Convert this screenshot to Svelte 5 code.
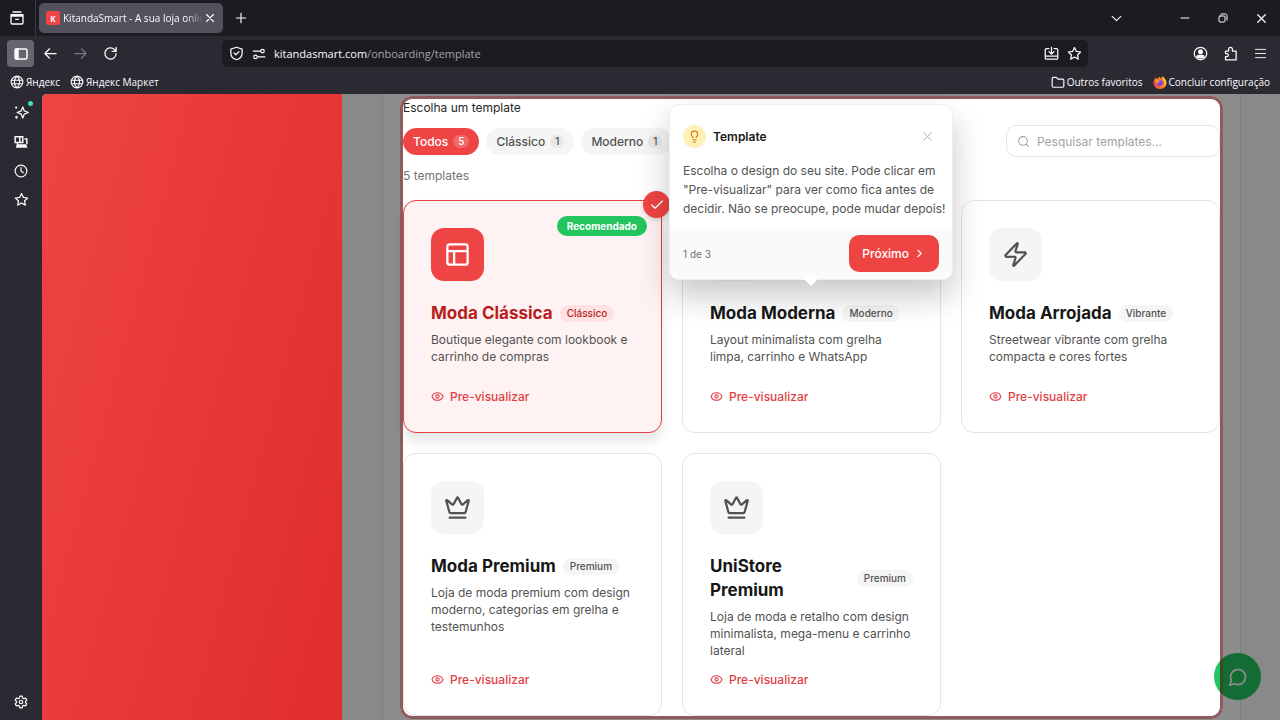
<script lang="ts">
  interface Template {
    id: string;
    name: string;
    category: string;
    description: string;
    icon: string;
    recommended?: boolean;
  }

  const templates: Template[] = [
    { id: 'classica', name: 'Moda Clássica', category: 'Clássico', description: 'Boutique elegante com lookbook e carrinho de compras', icon: 'layout', recommended: true },
    { id: 'moderna', name: 'Moda Moderna', category: 'Moderno', description: 'Layout minimalista com grelha limpa, carrinho e WhatsApp', icon: 'layout' },
    { id: 'arrojada', name: 'Moda Arrojada', category: 'Vibrante', description: 'Streetwear vibrante com grelha compacta e cores fortes', icon: 'zap' },
    { id: 'premium', name: 'Moda Premium', category: 'Premium', description: 'Loja de moda premium com design moderno, categorias em grelha e testemunhos', icon: 'crown' },
    { id: 'unistore', name: 'UniStore Premium', category: 'Premium', description: 'Loja de moda e retalho com design minimalista, mega-menu e carrinho lateral', icon: 'crown' },
  ];

  const filters = [
    { label: 'Todos', count: 5 },
    { label: 'Clássico', count: 1 },
    { label: 'Moderno', count: 1 },
  ];

  // All icons are drawn on a 24x24 grid
  const icons: Record<string, string> = {
    layout: 'M5 3h14a2 2 0 0 1 2 2v14a2 2 0 0 1-2 2H5a2 2 0 0 1-2-2V5a2 2 0 0 1 2-2zM3 9h18M9 21V9',
    zap: 'M4 14a1 1 0 0 1-.78-1.63l9.9-10.2a.5.5 0 0 1 .86.46l-1.92 6.02A1 1 0 0 0 13 10h7a1 1 0 0 1 .78 1.63l-9.9 10.2a.5.5 0 0 1-.86-.46l1.92-6.02A1 1 0 0 0 11 14z',
    crown: 'M11.562 3.266a.5.5 0 0 1 .876 0L15.39 8.87a1 1 0 0 0 1.516.294L21.183 5.5a.5.5 0 0 1 .798.519l-2.834 10.246a1 1 0 0 1-.956.734H5.81a1 1 0 0 1-.957-.734L2.02 6.02a.5.5 0 0 1 .798-.519l4.276 3.664a1 1 0 0 0 1.516-.294zM5 21h14',
    eye: 'M2.062 12.348a1 1 0 0 1 0-.696 10.75 10.75 0 0 1 19.876 0 1 1 0 0 1 0 .696 10.75 10.75 0 0 1-19.876 0M9 12a3 3 0 1 0 6 0a3 3 0 1 0-6 0',
    bulb: 'M15 14c.2-1 .7-1.7 1.5-2.5 1-.9 1.5-2.2 1.5-3.5A6 6 0 0 0 6 8c0 1 .2 2.2 1.5 3.5.7.7 1.3 1.5 1.5 2.5M9 18h6M10 22h4',
    message: 'M7.9 20A9 9 0 1 0 4 16.1L2 22Z',
    search: 'M3 11a8 8 0 1 0 16 0a8 8 0 1 0-16 0M21 21l-4.3-4.3',
    close: 'M18 6L6 18M6 6l12 12',
    check: 'M20 6L9 17l-5-5',
    chevronRight: 'M9 18l6-6-6-6',
    chevronDown: 'M4 8l8 8 8-8',
    plus: 'M12 4v16M4 12h16',
    minimize: 'M4 12h16',
    restore: 'M6 8h8a2 2 0 0 1 2 2v8a2 2 0 0 1-2 2H6a2 2 0 0 1-2-2v-8a2 2 0 0 1 2-2zM8 4h9a3 3 0 0 1 3 3v9',
    back: 'M21 12H3M10.500 4.500L3 12l7.500 7.500',
    forward: 'M3 12h18M13.500 4.500L21 12l-7.500 7.500',
    reload: 'M21 12a9 9 0 1 1-3-6.700l3 3M21 2v6.500h-6.500',
    box: 'M3 9h18v10a2 2 0 0 1-2 2H5a2 2 0 0 1-2-2zM3 9V7h18v2M6 3h12M10 14h4',
    shield: 'M12 2l9 3v6c0 6-4 9.500-9 11c-5-1.500-9-5-9-11V5zM8 11l3 3 5-5',
    tune: 'M2 7h13M15 7a3 3 0 1 0 6 0a3 3 0 1 0-6 0M9 17h13M3 17a3 3 0 1 0 6 0a3 3 0 1 0-6 0',
    install: 'M8 4H4a2 2 0 0 0-2 2v13a2 2 0 0 0 2 2h16a2 2 0 0 0 2-2V6a2 2 0 0 0-2-2h-4M2 16h20M12 2v10M8 9l4 4 4-4',
    star: 'M12 2.500l3 6.200 6.800.9-5 4.700 1.300 6.700-6.100-3.300L5.900 21l1.300-6.700-5-4.700 6.800-.9z',
    globe: 'M2 12a10 10 0 1 0 20 0a10 10 0 1 0-20 0M3 9h18M3 15h18M12 2c-6 6-6 14 0 20M12 2c6 6 6 14 0 20',
    folder: 'M2 6a2 2 0 0 1 2-2h5l3 3h8a2 2 0 0 1 2 2v10a2 2 0 0 1-2 2H4a2 2 0 0 1-2-2z',
    puzzle: 'M4 8h5V5a3 3 0 0 1 6 0v3h6v14H4v-5h2a2.500 2.500 0 0 0 0-5H4z',
    menu: 'M1 3h22M1 12h22M1 21h22',
    clock: 'M2 12a10 10 0 1 0 20 0a10 10 0 1 0-20 0M12 6v6l4 3',
    sparkle: 'M14 3l2.500 6.500L23 12l-6.500 2.500L14 21l-2.500-6.500L5 12l6.500-2.500zM2.500 4h2M2.500 19.500h3M3.500 3v2M4 18v3',
    gear: 'M10 2h4l.8 3.200 2 1.100 3.200-.9 2 3.500-2.400 2.200v1.800l2.400 2.200-2 3.500-3.200-.9-2 1.100L14 22h-4l-.8-3.200-2-1.100-3.200.9-2-3.500 2.400-2.200v-1.800L2 8.900l2-3.500 3.200.9 2-1.100zM9 12a3 3 0 1 0 6 0a3 3 0 1 0-6 0',
  };

  let selectedId = $state('classica');
  let activeFilter = $state('Todos');
  let query = $state('');
  let tourOpen = $state(true);

  let visible = $derived(
    templates.filter(
      (t) =>
        (activeFilter === 'Todos' || t.category === activeFilter) &&
        t.name.toLowerCase().includes(query.toLowerCase())
    )
  );
</script>

{#snippet icon(name: string, size: number, stroke = 2)}
  <svg
    width={size}
    height={size}
    viewBox="0 0 24 24"
    fill="none"
    stroke="currentColor"
    stroke-width={stroke}
    stroke-linecap="round"
    stroke-linejoin="round"
    aria-hidden="true"
  >
    <path d={icons[name]} />
  </svg>
{/snippet}

<div class="window">
  <header class="chrome">
    <div class="tab-bar">
      <button class="view-button" aria-label="Firefox View">{@render icon('box', 16)}</button>
      <div class="tab">
        <span class="favicon">K</span>
        <span class="tab-title">KitandaSmart - A sua loja online</span>
        <button class="tab-close" aria-label="Fechar separador">{@render icon('close', 14)}</button>
      </div>
      <button class="tool" aria-label="Novo separador">{@render icon('plus', 14)}</button>
      <div class="window-buttons">
        <button class="tabs-list" aria-label="Listar separadores">{@render icon('chevronDown', 13)}</button>
        <button aria-label="Minimizar">{@render icon('minimize', 12)}</button>
        <button aria-label="Restaurar">{@render icon('restore', 12)}</button>
        <button aria-label="Fechar">{@render icon('close', 15)}</button>
      </div>
    </div>

    <div class="toolbar">
      <button class="panel-toggle" aria-label="Barra lateral">
        <svg width="16" height="16" viewBox="0 0 16 16" fill="none" stroke="currentColor" stroke-width="1.5" aria-hidden="true">
          <rect x="2" y="3" width="12" height="10" rx="1.500" />
          <path d="M3 3h2v10H3z" fill="currentColor" />
        </svg>
      </button>
      <button class="tool" aria-label="Recuar">{@render icon('back', 15)}</button>
      <button class="tool tool--off" aria-label="Avançar" disabled>{@render icon('forward', 15)}</button>
      <button class="tool" aria-label="Recarregar">{@render icon('reload', 15)}</button>
      <div class="url-bar">
        {@render icon('shield', 15)}
        {@render icon('tune', 14)}
        <span class="url">kitandasmart.com<span class="url-path">/onboarding/template</span></span>
        {@render icon('install', 15)}
        {@render icon('star', 15)}
      </div>
      <button class="tool" aria-label="Conta">
        <svg width="15" height="15" viewBox="0 0 24 24" fill="none" stroke="currentColor" stroke-width="2" aria-hidden="true">
          <circle cx="12" cy="12" r="10" />
          <circle cx="12" cy="9" r="4" fill="currentColor" stroke="none" />
          <path d="M5 17c1-3 3-3 7-3s6 0 7 3c-3 4-11 4-14 0z" fill="currentColor" stroke="none" />
        </svg>
      </button>
      <button class="tool" aria-label="Extensões">{@render icon('puzzle', 15)}</button>
      <button class="tool" aria-label="Menu">{@render icon('menu', 11)}</button>
    </div>

    <nav class="bookmarks">
      <a href="#yandex">{@render icon('globe', 14)}Яндекс</a>
      <a href="#market">{@render icon('globe', 14)}Яндекс Маркет</a>
      <span class="spacer"></span>
      <a href="#others">{@render icon('folder', 14)}Outros favoritos</a>
      <a href="#setup">
        <svg width="14" height="14" viewBox="0 0 24 24" aria-hidden="true">
          <path d="M3 7l2-3 1 3 3-1 1-3c3 1 4 3 5 4V2c4 2 8 6 8 12a11 10 0 0 1-22 0c0-3 1-5 2-7z" fill="#ff7a2a" />
          <path d="M15 2c4 2 8 6 8 12a10 10 0 0 1-5 8c3-5 3-9 0-13z" fill="#ffc83c" />
          <path d="M1 12c1 8 8 11 15 9-6 0-11-3-12-10z" fill="#f0345c" />
          <circle cx="12" cy="13.500" r="5" fill="#7a46d8" />
          <path d="M5 10c3-2 5 0 8 0-1 2-4 1-4 4-2 0-4-2-4-4z" fill="#ff9638" />
        </svg>
        Concluir configuração
      </a>
    </nav>
  </header>

  <div class="body">
    <aside class="side-bar">
      <button class="has-dot" aria-label="Assistente">{@render icon('sparkle', 15)}</button>
      <button aria-label="Separadores sincronizados">
        <svg width="14" height="14" viewBox="0 0 24 24" fill="none" stroke="currentColor" stroke-width="2.5" aria-hidden="true">
          <path d="M2 3h13v10H2zM10 3v10M18 7h4v9M6 13v4" />
          <path d="M5 16h16l2 6H3z" fill="currentColor" stroke="none" />
        </svg>
      </button>
      <button aria-label="Histórico">{@render icon('clock', 14)}</button>
      <button aria-label="Favoritos">{@render icon('star', 15)}</button>
      <button class="settings" aria-label="Definições">{@render icon('gear', 14)}</button>
    </aside>

    <div class="page">
      <div class="hero"></div>

      <main>
        <section class="panel">
          <h1>Escolha um template</h1>
          <div class="filter-row">
            <div class="filters">
              {#each filters as f (f.label)}
                <button
                  class="pill"
                  class:pill--active={activeFilter === f.label}
                  onclick={() => (activeFilter = f.label)}
                >
                  {f.label}<span class="pill-count">{f.count}</span>
                </button>
              {/each}
            </div>
            <label class="search">
              {@render icon('search', 13)}
              <input type="text" placeholder="Pesquisar templates..." aria-label="Pesquisar templates" bind:value={query} />
            </label>
          </div>
          <p class="result-count">{visible.length} templates</p>

          <div class="cards">
            {#each visible as t (t.id)}
              <article class="card" class:card--selected={selectedId === t.id}>
                {#if selectedId === t.id}
                  <span class="card-check">{@render icon('check', 16)}</span>
                {/if}
                {#if t.recommended}
                  <span class="card-flag">Recomendado</span>
                {/if}
                <button class="card-icon" aria-label="Selecionar {t.name}" onclick={() => (selectedId = t.id)}>
                  {@render icon(t.icon, 27)}
                </button>
                <div class="card-heading">
                  <h2>{t.name}</h2>
                  <span class="category">{t.category}</span>
                </div>
                <p class="card-text">{t.description}</p>
                <button class="preview">{@render icon('eye', 13)}Pre-visualizar</button>
              </article>
            {/each}
          </div>
        </section>

        <button class="chat" aria-label="WhatsApp">{@render icon('message', 20)}</button>

        {#if tourOpen}
          <div class="spotlight"></div>
          <div class="tour" role="dialog" aria-labelledby="tour-title">
            <div class="tour-head">
              <span class="tour-bulb">{@render icon('bulb', 13)}</span>
              <h3 id="tour-title">Template</h3>
              <button class="tour-close" aria-label="Fechar" onclick={() => (tourOpen = false)}>
                {@render icon('close', 15, 1.5)}
              </button>
            </div>
            <p class="tour-text">
              Escolha o design do seu site. Pode clicar em "Pre-visualizar" para ver como fica antes de decidir. Não se preocupe, pode mudar depois!
            </p>
            <div class="tour-foot">
              <span>1 de 3</span>
              <button class="tour-next">Próximo{@render icon('chevronRight', 13)}</button>
            </div>
          </div>
        {/if}
      </main>
    </div>
  </div>
</div>

<style>
  :global(body) {
    margin: 0;
  }

  .window {
    display: flex;
    flex-direction: column;
    height: 100vh;
    overflow: hidden;
    background: #2b2a33;
    color: #fbfbfe;
    font-family: Inter, 'Liberation Sans', sans-serif;
    font-size: 12px;
  }

  .window *,
  .window *::before,
  .window *::after {
    box-sizing: border-box;
  }

  button {
    display: flex;
    align-items: center;
    justify-content: center;
    padding: 0;
    border: none;
    background: none;
    color: inherit;
    font: inherit;
    cursor: pointer;
  }

  svg {
    flex: none;
    display: block;
  }

  h1,
  h2,
  h3,
  p {
    margin: 0;
  }

  /* Browser chrome */
  .chrome {
    flex: none;
    font-family: 'Open Sans', 'Noto Sans', sans-serif;
    font-size: 10px;
  }

  .tab-bar {
    display: flex;
    align-items: center;
    height: 36px;
    background: #1c1b22;
  }

  .view-button {
    width: 36px;
    height: 36px;
    margin-right: 3px;
    padding-right: 2px;
    border-right: 1px solid #3b3a44;
  }

  .tab {
    display: flex;
    align-items: center;
    width: 184px;
    height: 30px;
    padding: 0 6px 0 7px;
    border-radius: 5px;
    background: #53515c;
  }

  .favicon {
    display: flex;
    align-items: center;
    justify-content: center;
    flex: none;
    width: 14px;
    height: 14px;
    margin-right: 3px;
    border-radius: 2px;
    background: #ef4444;
    font-size: 8px;
    font-weight: 700;
  }

  .tab-title {
    flex: 1;
    overflow: hidden;
    white-space: nowrap;
    mask-image: linear-gradient(to right, #000 88%, transparent);
  }

  .tab-close {
    width: 14px;
    height: 20px;
  }

  .tool {
    flex: none;
    width: 30px;
    height: 30px;
  }

  .tab-bar .tool {
    margin-left: 3px;
  }

  .tool--off {
    color: #77767e;
  }

  .window-buttons {
    display: flex;
    margin-left: auto;
  }

  .window-buttons button {
    width: 38px;
    height: 36px;
  }

  .window-buttons .tabs-list {
    margin-right: 31px;
  }

  .toolbar {
    display: flex;
    align-items: center;
    height: 35px;
    padding: 0 5px 0 7px;
  }

  .panel-toggle {
    flex: none;
    width: 27px;
    height: 27px;
    margin-right: 1px;
    border-radius: 4px;
    background: #67666e;
  }

  .url-bar {
    display: flex;
    flex: 1;
    align-items: center;
    gap: 8px;
    height: 27px;
    margin: 0 97px;
    padding: 0 6px 0 7px;
    border-radius: 5px;
    background: #1c1b22;
    font-size: 11px;
  }

  .url {
    flex: 1;
  }

  .url-path {
    color: #a3a2a9;
  }

  .bookmarks {
    display: flex;
    align-items: center;
    gap: 10px;
    height: 23px;
    padding: 0 10px 1px;
  }

  .bookmarks a {
    display: flex;
    align-items: center;
    gap: 2px;
    color: inherit;
    text-decoration: none;
  }

  .spacer {
    flex: 1;
  }

  .body {
    display: flex;
    flex: 1;
    min-height: 0;
  }

  .side-bar {
    display: flex;
    flex-direction: column;
    align-items: center;
    flex: none;
    width: 42px;
    padding: 4px 0;
  }

  .side-bar button {
    position: relative;
    width: 29px;
    height: 29px;
  }

  .side-bar .settings {
    margin-top: auto;
  }

  .has-dot::after {
    content: '';
    position: absolute;
    top: 3px;
    right: 3px;
    width: 5px;
    height: 5px;
    border-radius: 50%;
    background: #3fe1b0;
  }

  /* Page */
  .page {
    display: flex;
    flex: 1;
    min-width: 0;
    overflow: hidden;
    border-top-left-radius: 5px;
    background: #fafafa;
    color: #171717;
  }

  .hero {
    flex: none;
    width: 300px;
    background: linear-gradient(105deg, #ef4444, #e02d2d);
  }

  main {
    position: relative;
    flex: 1;
    min-width: 0;
    padding: 0 39px 0 40px;
    overflow: hidden;
  }

  .panel {
    min-height: 100%;
    padding: 5px 20px;
    border: solid #e5e5e5;
    border-width: 0 1px;
    background: #fff;
  }

  h1 {
    font-size: 12px;
    font-weight: 400;
    line-height: 18px;
    color: #262626;
  }

  .filter-row {
    display: flex;
    align-items: center;
    justify-content: space-between;
    margin-top: 8px;
  }

  .filters {
    display: flex;
    gap: 7px;
  }

  .pill {
    gap: 5px;
    height: 27px;
    padding: 0 10px;
    border-radius: 14px;
    background: #f5f5f5;
    color: #525252;
    font-weight: 500;
  }

  .pill-count {
    padding: 0 5px;
    border-radius: 7px;
    background: #e8e8e8;
    font-size: 10px;
    line-height: 13px;
  }

  .pill--active {
    background: #ef4444;
    color: #fff;
  }

  .pill--active .pill-count {
    background: #f26969;
  }

  .search {
    display: flex;
    align-items: center;
    gap: 7px;
    width: 214px;
    height: 32px;
    padding: 0 10px;
    border: 1px solid #e5e5e5;
    border-radius: 10px;
    color: #a3a3a3;
  }

  .search input {
    flex: 1;
    min-width: 0;
    padding: 0;
    border: none;
    outline: none;
    background: none;
    font: inherit;
    color: #171717;
  }

  .search input::placeholder {
    color: #a3a3a3;
  }

  .result-count {
    margin: 10px 0 15px;
    line-height: 18px;
    color: #737373;
  }

  .cards {
    display: grid;
    grid-template-columns: repeat(3, 1fr);
    gap: 20px;
  }

  .card {
    position: relative;
    display: flex;
    flex-direction: column;
    align-items: flex-start;
    min-height: 233px;
    padding: 27px;
    border: 1px solid #e5e5e5;
    border-radius: 13px;
    background: #fff;
  }

  .card--selected {
    border-color: #e23e44;
    background: #fef2f2;
    box-shadow: 0 8px 12px rgba(0, 0, 0, 0.1);
  }

  .card-check {
    position: absolute;
    top: -10px;
    right: -9px;
    display: flex;
    align-items: center;
    justify-content: center;
    width: 27px;
    height: 27px;
    border-radius: 50%;
    background: #ef4444;
    color: #fff;
    box-shadow: 0 2px 4px rgba(0, 0, 0, 0.15);
  }

  .card-flag {
    position: absolute;
    top: 15px;
    right: 14px;
    padding: 0 10px;
    border-radius: 10px;
    background: #22c55e;
    color: #fff;
    font-size: 10px;
    font-weight: 700;
    line-height: 20px;
  }

  .card-icon {
    width: 53px;
    height: 53px;
    border-radius: 13px;
    background: #f5f5f5;
    color: #525252;
  }

  .card--selected .card-icon {
    background: #ef4444;
    color: #fff;
  }

  .card-heading {
    display: flex;
    align-items: center;
    gap: 7px;
    margin-top: 20px;
  }

  h2 {
    font-size: 17px;
    font-weight: 700;
    line-height: 24px;
  }

  .card--selected h2 {
    color: #b91c1c;
  }

  .category {
    padding: 0 7px;
    border-radius: 9px;
    background: #f5f5f5;
    color: #525252;
    font-size: 10px;
    font-weight: 500;
    line-height: 17px;
  }

  .card--selected .category {
    background: #fee2e2;
    color: #b91c1c;
  }

  .card-text {
    margin: 6px 0 12px;
    color: #525252;
    line-height: 17px;
  }

  .preview {
    gap: 6px;
    height: 17px;
    margin-top: auto;
    color: #e23e44;
    font-weight: 500;
  }

  .chat {
    position: absolute;
    right: 19px;
    bottom: 20px;
    width: 47px;
    height: 47px;
    border-radius: 50%;
    background: #22c55e;
    color: #fff;
  }

  /* Guided tour: the spotlight dims everything outside of itself */
  .spotlight {
    position: absolute;
    inset: 2px 57px 1px 58px;
    border: 3px solid rgba(78, 4, 7, 0.65);
    border-radius: 12px;
    box-shadow: 0 0 0 2000px rgba(0, 0, 0, 0.45);
    pointer-events: none;
  }

  .tour {
    position: absolute;
    top: 10px;
    left: 50%;
    width: 284px;
    border: 1px solid #efefef;
    border-radius: 10px;
    background: #fff;
    box-shadow: 0 16px 32px rgba(0, 0, 0, 0.22);
    transform: translateX(-50%);
  }

  .tour::after {
    content: '';
    position: absolute;
    bottom: -5px;
    left: 50%;
    width: 10px;
    height: 10px;
    margin-left: -5px;
    background: #fff;
    transform: rotate(45deg);
  }

  .tour-head {
    display: flex;
    align-items: center;
    gap: 7px;
    padding: 20px 17px 13px 13px;
  }

  .tour-bulb {
    display: flex;
    align-items: center;
    justify-content: center;
    width: 23px;
    height: 23px;
    border-radius: 50%;
    background: #fef0b8;
    color: #d97706;
  }

  h3 {
    flex: 1;
    font-size: 12px;
    font-weight: 600;
  }

  .tour-close {
    width: 16px;
    height: 16px;
    color: #a3a3a3;
  }

  .tour-text {
    padding: 0 4px 10px 13px;
    color: #525252;
    line-height: 19px;
  }

  .tour-foot {
    display: flex;
    align-items: center;
    justify-content: space-between;
    padding: 7px 13px;
    border-radius: 0 0 10px 10px;
    background: #fafafa;
    color: #737373;
    font-size: 10px;
  }

  .tour-next {
    position: relative;
    z-index: 1;
    gap: 4px;
    height: 37px;
    padding: 0 13px;
    border-radius: 10px;
    background: #ef4444;
    color: #fff;
    font-size: 12px;
    font-weight: 500;
  }
</style>
